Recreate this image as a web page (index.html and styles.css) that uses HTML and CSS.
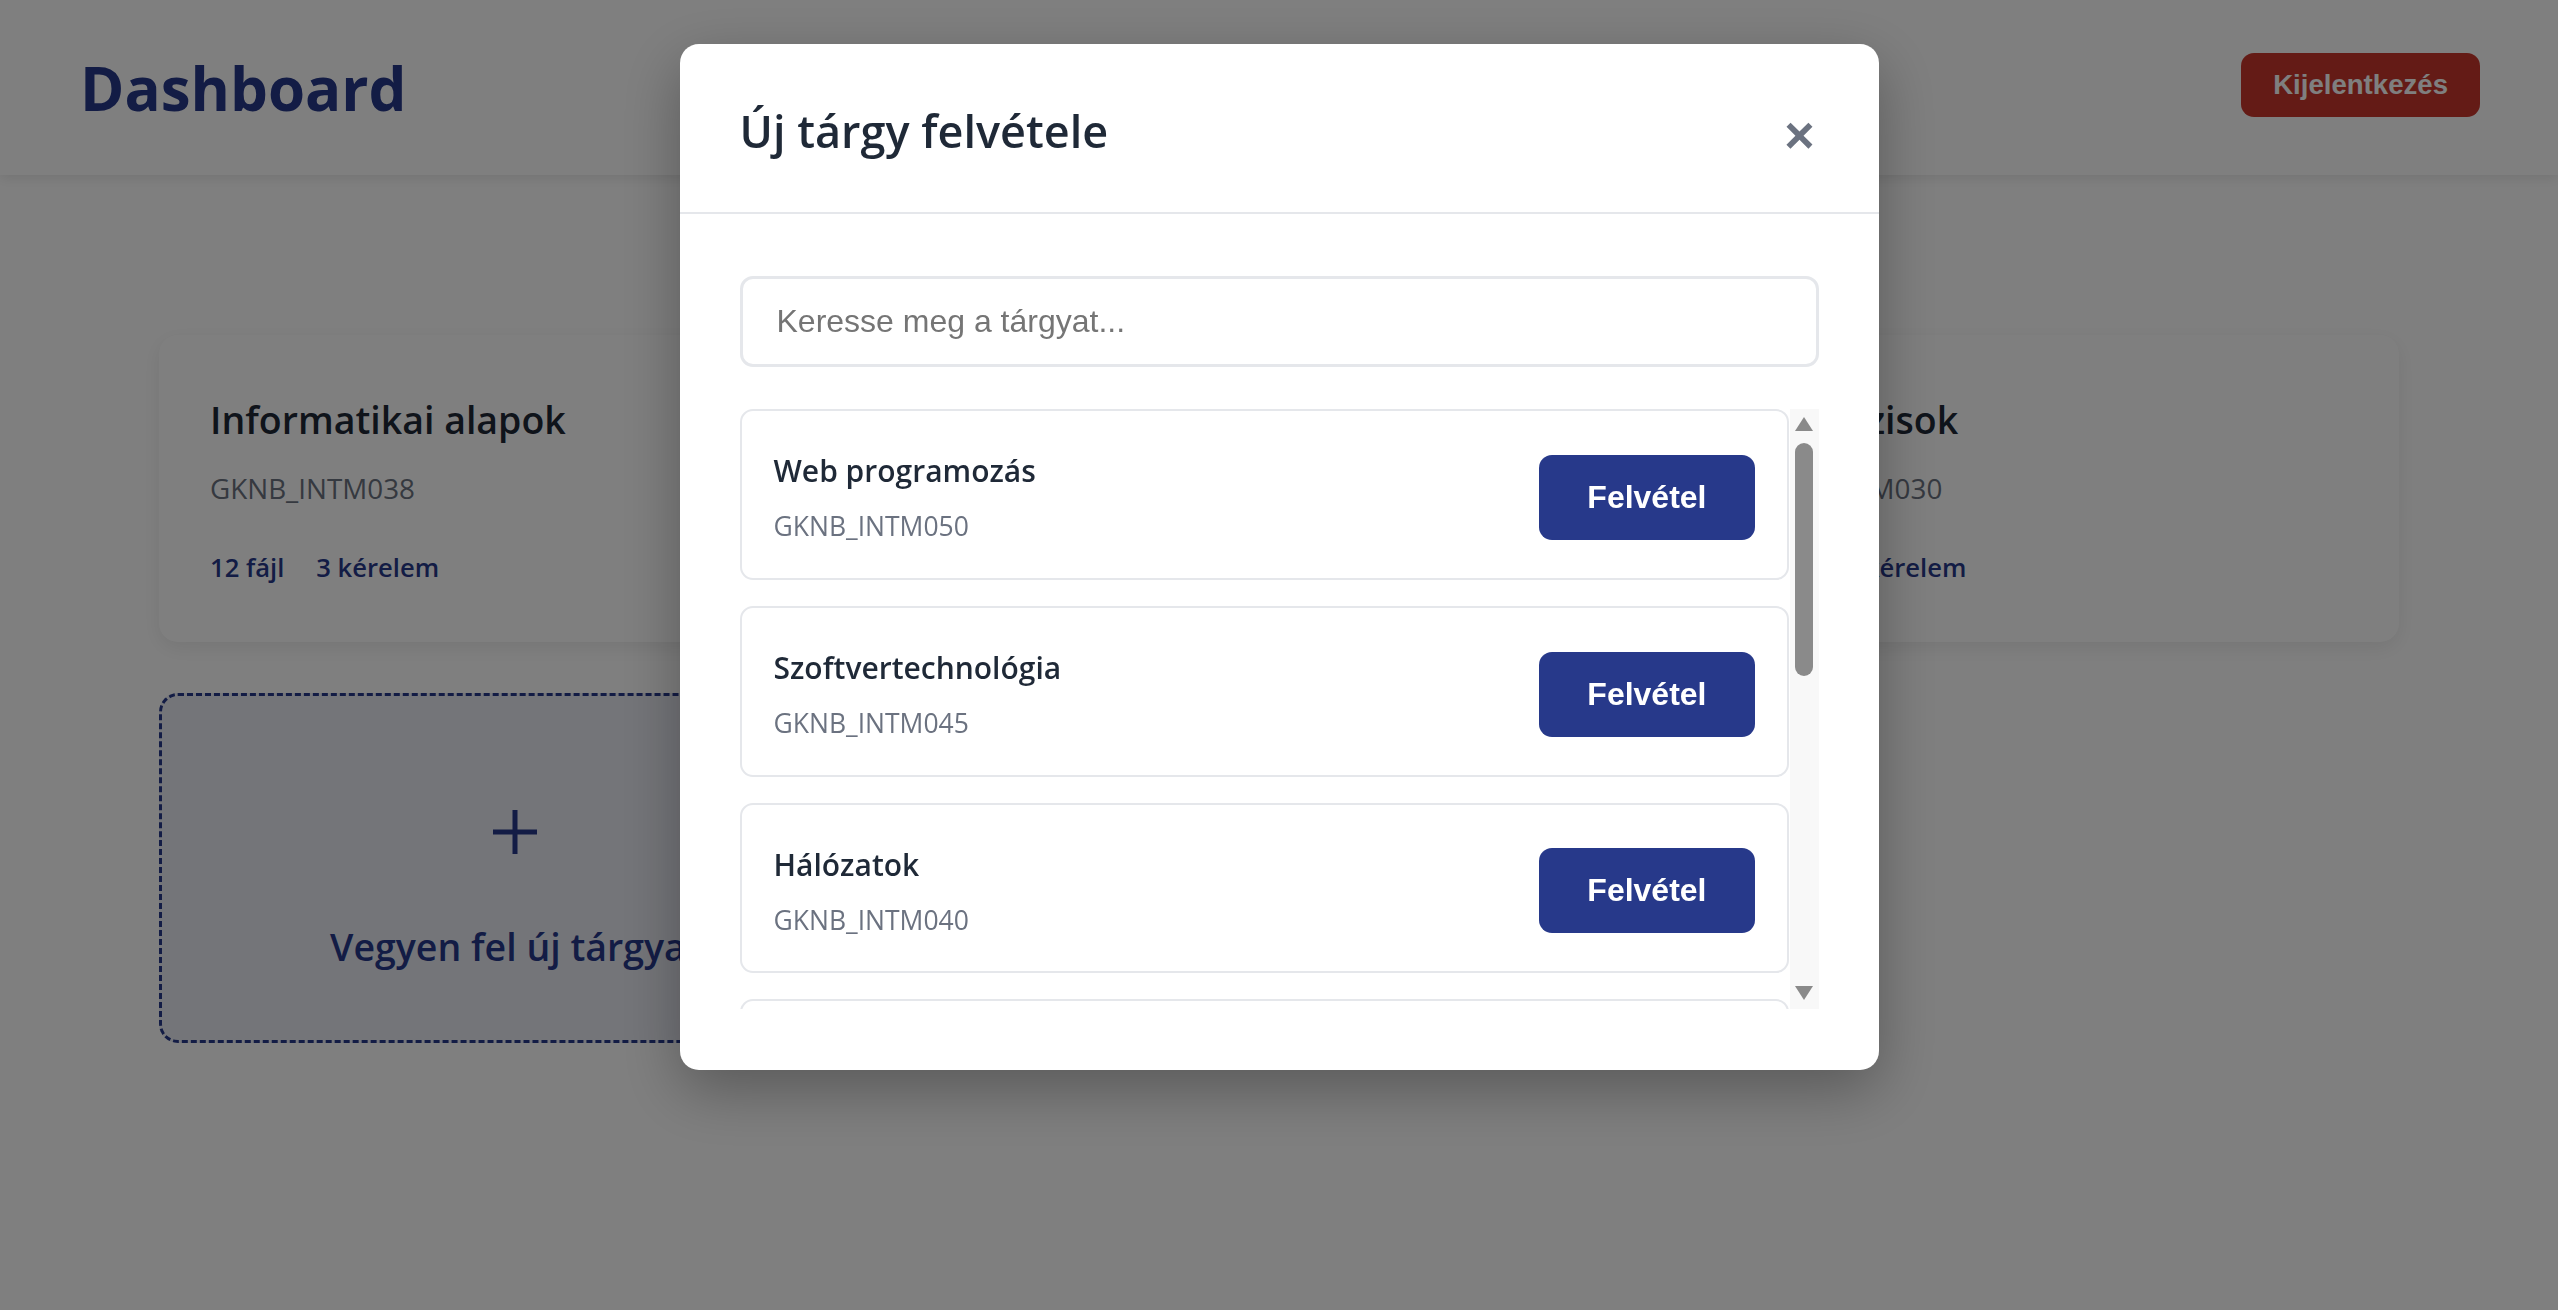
FILE: index.html
```html
<!DOCTYPE html>
<html lang="hu">
<head>
<meta charset="utf-8">
<title>Dashboard</title>
<link rel="stylesheet" href="styles.css">
</head>
<body>
<header class="topbar">
  <h1 class="brand">Dashboard</h1>
  <button class="logout-btn" type="button">Kijelentkezés</button>
</header>

<main class="content">
  <div class="course-grid">
    <article class="course-card">
      <h3 class="course-title">Informatikai alapok</h3>
      <p class="course-code">GKNB_INTM038</p>
      <div class="course-stats"><span>12 fájl</span><span>3 kérelem</span></div>
    </article>
    <article class="course-card">
      <h3 class="course-title">Programozás alapjai</h3>
      <p class="course-code">GKNB_INTM034</p>
      <div class="course-stats"><span>8 fájl</span><span>1 kérelem</span></div>
    </article>
    <article class="course-card">
      <h3 class="course-title">Adatbázisok</h3>
      <p class="course-code">GKNB_INTM030</p>
      <div class="course-stats"><span>15 fájl</span><span>2 kérelem</span></div>
    </article>
    <button class="add-card" type="button">
      <svg class="add-icon" viewBox="0 0 44 44" aria-hidden="true"><rect x="19.5" y="0" width="5" height="44"/><rect x="0" y="19.5" width="44" height="5"/></svg>
      <span class="add-label">Vegyen fel új tárgyat</span>
    </button>
  </div>
</main>

<div class="overlay">
  <div class="modal" role="dialog" aria-labelledby="modal-title">
    <div class="modal-header">
      <h2 class="modal-title" id="modal-title">Új tárgy felvétele</h2>
      <button class="modal-close" type="button" aria-label="Bezárás">×</button>
    </div>
    <div class="modal-body">
      <input class="search-input" type="text" placeholder="Keresse meg a tárgyat...">
      <div class="list-wrap">
        <div class="subject-list">
          <div class="subject-item">
            <div class="subject-info"><div class="subject-name">Web programozás</div><div class="subject-code">GKNB_INTM050</div></div>
            <button class="enroll-btn" type="button">Felvétel</button>
          </div>
          <div class="subject-item">
            <div class="subject-info"><div class="subject-name">Szoftvertechnológia</div><div class="subject-code">GKNB_INTM045</div></div>
            <button class="enroll-btn" type="button">Felvétel</button>
          </div>
          <div class="subject-item">
            <div class="subject-info"><div class="subject-name">Hálózatok</div><div class="subject-code">GKNB_INTM040</div></div>
            <button class="enroll-btn" type="button">Felvétel</button>
          </div>
          <div class="subject-item">
            <div class="subject-info"><div class="subject-name">Operációs rendszerek</div><div class="subject-code">GKNB_INTM035</div></div>
            <button class="enroll-btn" type="button">Felvétel</button>
          </div>
          <div class="subject-item">
            <div class="subject-info"><div class="subject-name">Mesterséges intelligencia</div><div class="subject-code">GKNB_INTM055</div></div>
            <button class="enroll-btn" type="button">Felvétel</button>
          </div>
          <div class="subject-item">
            <div class="subject-info"><div class="subject-name">Algoritmusok és adatszerkezetek</div><div class="subject-code">GKNB_INTM025</div></div>
            <button class="enroll-btn" type="button">Felvétel</button>
          </div>
          <div class="subject-item">
            <div class="subject-info"><div class="subject-name">Számítógép architektúrák</div><div class="subject-code">GKNB_INTM020</div></div>
            <button class="enroll-btn" type="button">Felvétel</button>
          </div>
        </div>
        <div class="scrollbar" aria-hidden="true">
          <span class="sb-arrow sb-up"></span>
          <span class="sb-thumb"></span>
          <span class="sb-arrow sb-down"></span>
        </div>
      </div>
    </div>
  </div>
</div>
</body>
</html>
```

FILE: styles.css
```css
* {
  box-sizing: border-box;
}

html,
body {
  margin: 0;
}

body {
  font-family: "Open Sans", "Noto Sans", sans-serif;
  background: #ffffff;
  color: #1f2937;
  min-height: 100vh;
}

/* ---------- Top bar ---------- */
.topbar {
  position: relative;
  z-index: 1;
  height: 175px;
  display: flex;
  align-items: center;
  justify-content: space-between;
  padding: 0 78px 0 80px;
  background: #ffffff;
  box-shadow: 0 3px 12px rgba(0, 0, 0, 0.1);
}

.brand {
  margin: 0;
  font-size: 60px;
  font-weight: 700;
  line-height: 1.2;
  color: #27398a;
}

.logout-btn {
  margin-bottom: 6px;
  font-family: "Liberation Sans", Arial, sans-serif;
  font-size: 27.6px;
  font-weight: 700;
  line-height: normal;
  color: #ffffff;
  background: #c8372d;
  border: none;
  border-radius: 13px;
  padding: 16px 32px;
  cursor: pointer;
}

/* ---------- Content ---------- */
.content {
  padding: 160px 0 80px;
}

.course-grid {
  max-width: 2240px;
  margin: 0 auto;
  display: grid;
  grid-template-columns: repeat(3, 1fr);
  gap: 51px;
}

.course-card {
  background: #ffffff;
  border-radius: 19px;
  padding: 57px 51px 55px;
  box-shadow: 0 6px 20px rgba(0, 0, 0, 0.08);
}

.course-title {
  margin: 0 0 20px;
  font-size: 37.5px;
  font-weight: 600;
  line-height: 1.5;
  color: #1f2937;
}

.course-code {
  margin: 0;
  font-size: 27.8px;
  line-height: 1.5;
  color: #6b7280;
}

.course-stats {
  margin-top: 39px;
  display: flex;
  gap: 32px;
  font-size: 25.6px;
  font-weight: 600;
  line-height: 1.5;
  color: #27398a;
}

.add-card {
  grid-column: 1;
  min-height: 350px;
  display: flex;
  flex-direction: column;
  align-items: center;
  justify-content: center;
  padding: 48px 0 0;
  border: 3px dashed #27398a;
  border-radius: 19px;
  background: rgba(39, 57, 138, 0.1);
  color: #27398a;
  font-family: inherit;
  cursor: pointer;
}

.add-icon {
  width: 44px;
  height: 44px;
  margin-bottom: 65px;
  fill: currentColor;
}

.add-label {
  font-size: 37.5px;
  font-weight: 600;
  line-height: 1.5;
}

/* ---------- Modal ---------- */
.overlay {
  position: fixed;
  inset: 0;
  z-index: 10;
  display: flex;
  justify-content: center;
  align-items: flex-start;
  padding-top: 44px;
  background: rgba(0, 0, 0, 0.5);
}

.modal {
  width: 1199px;
  background: #ffffff;
  border-radius: 19px;
  box-shadow: 0 20px 60px rgba(0, 0, 0, 0.3);
  overflow: hidden;
}

.modal-header {
  height: 170px;
  display: flex;
  align-items: center;
  justify-content: space-between;
  padding: 6px 60px 0;
  border-bottom: 2px solid #e5e7eb;
}

.modal-title {
  margin: 0;
  font-size: 45px;
  font-weight: 600;
  line-height: 1.2;
  color: #1f2937;
}

.modal-close {
  margin-top: 8px;
  padding: 0 4px;
  background: none;
  border: none;
  font-family: "Liberation Sans", Arial, sans-serif;
  font-size: 52px;
  font-weight: 700;
  line-height: 1;
  color: #6b7280;
  cursor: pointer;
}

.modal-body {
  padding: 62px 60px 61px;
}

.search-input {
  display: block;
  width: 100%;
  height: 91px;
  margin-bottom: 42px;
  padding: 0 31px 0 34px;
  border: 3px solid #e5e7eb;
  border-radius: 13px;
  font-family: "Liberation Sans", Arial, sans-serif;
  font-size: 32px;
  color: #1f2937;
  outline: none;
}

.search-input::placeholder {
  color: #757575;
}

.list-wrap {
  display: flex;
  height: 600px;
}

.subject-list {
  flex: 1;
  min-width: 0;
  overflow-y: auto;
  padding-right: 1px;
}

.subject-item {
  display: flex;
  align-items: center;
  justify-content: space-between;
  margin-bottom: 26px;
  padding: 37px 32px 31px;
  border: 2px solid #e5e7eb;
  border-radius: 13px;
}

.subject-name {
  margin-bottom: 14px;
  font-size: 30px;
  font-weight: 600;
  line-height: 1.5;
  color: #1f2937;
}

.subject-code {
  font-size: 26.5px;
  line-height: 1.5;
  color: #6b7280;
}

.enroll-btn {
  font-family: "Liberation Sans", Arial, sans-serif;
  font-size: 32px;
  font-weight: 700;
  line-height: normal;
  color: #ffffff;
  background: #27398a;
  border: none;
  border-radius: 13px;
  padding: 24px 48px;
  cursor: pointer;
}

/* ---------- List scrollbar ---------- */
.scrollbar {
  flex: 0 0 29px;
  display: flex;
  flex-direction: column;
  align-items: center;
  padding: 8px 0 9px;
  background: #f8f8f8;
}

.sb-arrow {
  display: block;
  width: 18px;
  height: 14px;
  background: #8a8a8a;
}

.sb-up {
  clip-path: polygon(50% 0, 100% 100%, 0 100%);
}

.sb-down {
  margin-top: auto;
  clip-path: polygon(0 0, 100% 0, 50% 100%);
}

.sb-thumb {
  display: block;
  width: 18px;
  height: 233px;
  margin-top: 12px;
  border-radius: 9px;
  background: #8a8a8a;
}
```
